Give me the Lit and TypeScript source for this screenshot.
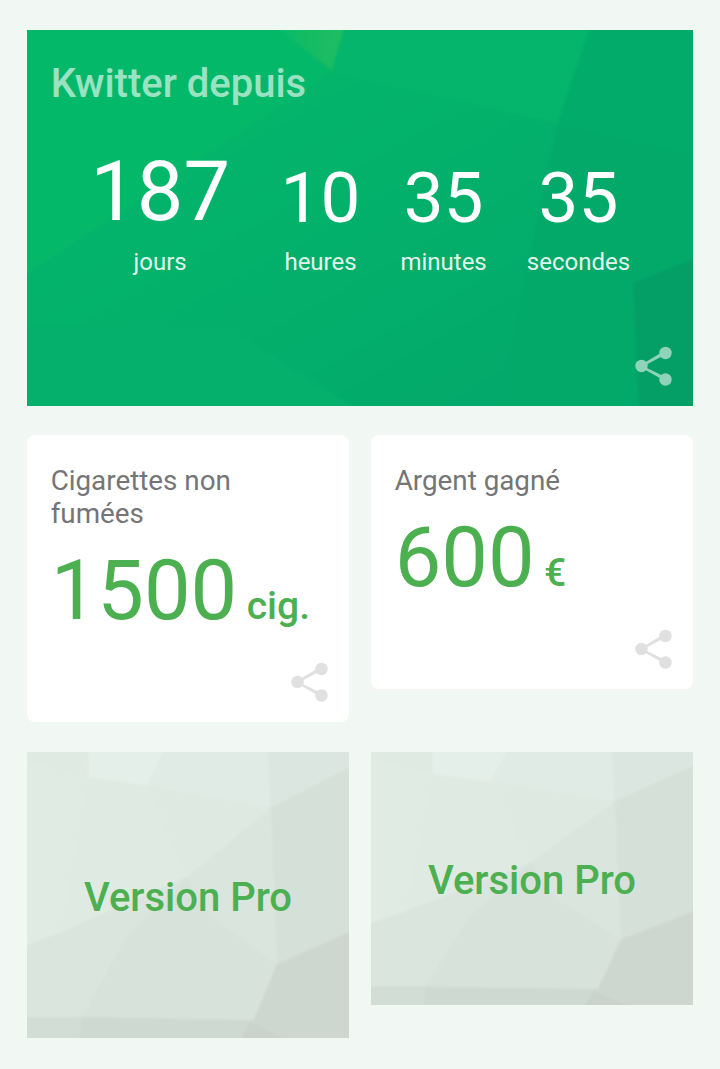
import { LitElement, html, css, svg } from "lit";
import { customElement } from "lit/decorators.js";

const share = html`<svg class="share" viewBox="0 0 38 40" width="38" height="40" aria-hidden="true">
  <g fill="currentColor" stroke="none">
    <path d="M29.5 4.8 31.3 8 8.4 20.2 31.3 31.6 29.7 34.8 3.7 20.2Z"/>
    <circle cx="30.5" cy="7" r="6.2"/>
    <circle cx="6.5" cy="20" r="6.2"/>
    <circle cx="30.5" cy="33.5" r="6.2"/>
  </g>
</svg>`;

const proPolys = (h: number) => {
  const k = h / 286;
  const p = (s: string) =>
    s.split(" ").map((c) => { const [x, y] = c.split(","); return `${x},${+y * k}`; }).join(" ");
  const items: [string, string][] = [
    ["0,0 63,0 63,27 0,10", "#dfeae3"],
    ["63,0 137,0 120,35 63,27", "#e5efe9"],
    ["137,0 240,0 243,57 120,35", "#e1ebe5"],
    ["240,0 323,0 323,16 243,57", "#dce6e0"],
    ["0,10 63,27 35,180 0,193", "#e0ebe4"],
    ["63,27 120,35 160,125 35,180", "#dfeae3"],
    ["120,35 243,57 160,125", "#dee9e2"],
    ["243,57 249,211 185,165 160,125", "#dae5de"],
    ["243,57 323,16 323,178 249,211", "#d5e0d9"],
    ["160,125 185,165 249,211 226,266 55,263 100,185", "#d7e2db"],
    ["0,193 35,180 160,125 100,185 55,263 0,263", "#dae5de"],
    ["249,211 323,178 323,286 222,286 226,266", "#cdd7d0"],
    ["0,263 55,263 53,286 0,286", "#d2ddd6"],
    ["55,263 226,266 222,286 53,286", "#ced9d2"],
    ["222,268 258,286 213,286", "#c9d3cc"],
  ];
  return items.map(([pts, fill]) => svg`<polygon points=${p(pts)} fill=${fill}/>`);
};

@customElement("pro-card")
class ProCard extends LitElement {
  static properties = { h: { type: Number } };
  h = 286;
  static styles = css`
    :host { display: block; margin-top: 1px; }
    .pro { position: relative; display: flex; align-items: center; justify-content: center; overflow: hidden; background: #dde8e1; box-sizing: border-box; padding-top: 5px; }
    svg { position: absolute; inset: -2px; width: calc(100% + 4px); height: calc(100% + 4px); filter: blur(1.2px); }
    span { position: relative; font: 500 40px/1 Roboto, sans-serif; color: #4caf50; }
  `;
  render() {
    return html`<div class="pro" style="height:${this.h}px">
      <svg viewBox="0 0 323 ${this.h}" preserveAspectRatio="none">${proPolys(this.h)}</svg>
      <span>Version Pro</span>
    </div>`;
  }
}

@customElement("app-root")
class AppRoot extends LitElement {
  static styles = css`
    :host { display: block; min-height: 1069px; background: #f1f7f2; font-family: Roboto, sans-serif; }
    .page { display: grid; grid-template-columns: 1fr 1fr; column-gap: 21.33px; row-gap: 29px; padding: 30px 26.67px 0; align-items: start; }
    .hero { grid-column: 1 / -1; position: relative; height: 376px; overflow: hidden; background: #04b46c; }
    .bg { position: absolute; inset: -3px; width: calc(100% + 6px); height: calc(100% + 6px); filter: blur(1.5px); }
    .hero-in { position: relative; padding: 33px 24px 0; }
    h1 { margin: 0; font: 500 40px/42px Roboto, sans-serif; color: rgba(255,255,255,.6); }
    .stats { display: flex; align-items: flex-end; gap: 40px; margin: 45px 0 0 39.5px; color: #fff; }
    .stat { display: flex; flex-direction: column; align-items: center; }
    .stat.big { margin-right: 10.5px; }
    .num { font-weight: 400; font-size: 71px; line-height: 71px; }
    .big .num { font-size: 83px; line-height: 83px; }
    .lab { font-weight: 400; font-size: 24px; line-height: 28px; margin-top: 15px; color: rgba(255,255,255,.9); }
    .hero .share { position: absolute; right: 20px; bottom: 20px; color: #fff; opacity: .55; }
    .card { position: relative; background: #fff; border-radius: 8px; padding: 29px 24px 0; box-sizing: border-box; }
    .card .share { position: absolute; right: 20px; bottom: 20px; color: #e0e0e0; }
    .t { font-weight: 400; font-size: 27.8px; line-height: 33px; color: #757575; }
    .v { display: flex; align-items: baseline; color: #4caf50; margin-top: 15px; }
    .v b { font-weight: 400; font-size: 83px; line-height: 92px; }
    .v i { font-style: normal; font-weight: 500; font-size: 39px; margin-left: 9.5px; }
  `;
  render() {
    return html`<div class="page">
      <section class="hero">
        <svg class="bg" viewBox="0 0 667 376" preserveAspectRatio="none">
          <defs>
            <linearGradient id="g" x1="0" y1="0" x2="1" y2="1">
              <stop offset="0" stop-color="#04b96a"/><stop offset=".5" stop-color="#03b06b"/><stop offset="1" stop-color="#03a569"/>
            </linearGradient>
            <linearGradient id="t" x1="0" y1="0" x2="1" y2="0">
              <stop offset="0" stop-color="#08bb68"/><stop offset="1" stop-color="#20bd60"/>
            </linearGradient>
          </defs>
          <rect width="667" height="376" fill="url(#g)"/>
          <polygon points="0,0 250,0 305,45 0,245" fill="#04b86a"/>
          <polygon points="250,0 318,0 305,43" fill="url(#t)"/>
          <polygon points="318,0 561,0 529,95 305,45" fill="#04b56b"/>
          <polygon points="561,0 667,0 667,125 529,95" fill="#03ab6b"/>
          <polygon points="667,125 667,376 470,376 529,95" fill="#03a969"/>
          <polygon points="604,252 667,227 667,376 610,376" fill="#049e67"/>
          <polygon points="0,295 200,295 330,376 0,376" fill="#04b06b"/>
        </svg>
        <div class="hero-in">
          <h1>Kwitter depuis</h1>
          <div class="stats">
            <div class="stat big"><span class="num">187</span><span class="lab">jours</span></div>
            <div class="stat"><span class="num">10</span><span class="lab">heures</span></div>
            <div class="stat"><span class="num">35</span><span class="lab">minutes</span></div>
            <div class="stat"><span class="num">35</span><span class="lab">secondes</span></div>
          </div>
        </div>
        ${share}
      </section>
      <section class="card" style="height:287px">
        <div class="t">Cigarettes non<br>fumées</div>
        <div class="v"><b>1500</b><i>cig.</i></div>
        ${share}
      </section>
      <section class="card" style="height:254px">
        <div class="t">Argent gagné</div>
        <div class="v"><b>600</b><i>€</i></div>
        ${share}
      </section>
      <pro-card .h=${286}></pro-card>
      <pro-card .h=${253}></pro-card>
    </div>`;
  }
}
